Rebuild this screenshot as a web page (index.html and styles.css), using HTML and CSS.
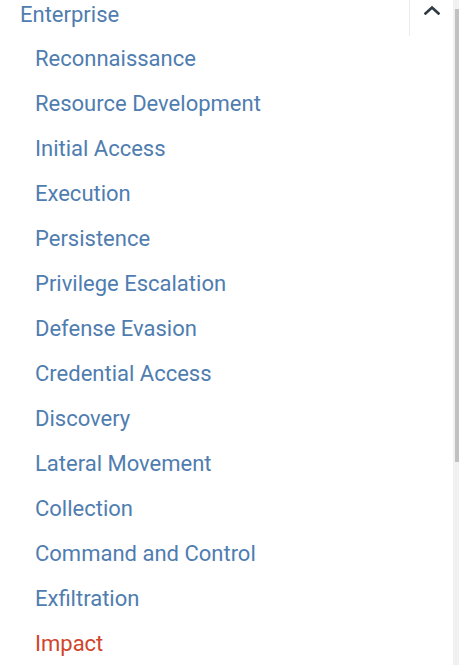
FILE: index.html
```html
<!DOCTYPE html>
<html>
<head>
<meta charset="utf-8">
<link rel="stylesheet" href="styles.css">
</head>
<body>
<div class="page">
  <nav class="sidebar">
    <div class="header">
      <span class="title">Enterprise</span>
      <button class="toggle" aria-label="collapse">
        <svg width="16" height="10" viewBox="0 0 16 10"><polyline points="1.5,8.5 8,2.5 14.5,8.5" fill="none" stroke="#2f3a44" stroke-width="2.6" stroke-linecap="square"/></svg>
      </button>
    </div>
    <ul class="items">
      <li>Reconnaissance</li>
      <li>Resource Development</li>
      <li>Initial Access</li>
      <li>Execution</li>
      <li>Persistence</li>
      <li>Privilege Escalation</li>
      <li>Defense Evasion</li>
      <li>Credential Access</li>
      <li>Discovery</li>
      <li>Lateral Movement</li>
      <li>Collection</li>
      <li>Command and Control</li>
      <li>Exfiltration</li>
      <li class="active">Impact</li>
    </ul>
  </nav>
  <div class="scrollbar"><div class="thumb"></div></div>
</div>
</body>
</html>
```
FILE: styles.css
```css
html, body {
  margin: 0;
  padding: 0;
  background: #fff;
  overflow: hidden;
}
.page {
  display: flex;
  width: 459px;
  height: 665px;
  font-family: Roboto, "Liberation Sans", sans-serif;
}
.sidebar {
  width: 453px;
  flex: none;
}
.header {
  display: flex;
  height: 36px;
}
.title {
  flex: 1;
  padding-left: 20px;
  font-size: 22px;
  line-height: 29px;
  color: #4f7db0;
}
.toggle {
  width: 44px;
  height: 36px;
  border: none;
  border-left: 1px solid #ececec;
  background: #fff;
  padding: 0 0 0 1px;
  display: flex;
  align-items: flex-start;
  justify-content: center;
  padding-top: 5px;
  box-sizing: border-box;
}
.items {
  list-style: none;
  margin: 0;
  padding: 0 0 0 35px;
}
.items li {
  font-size: 22px;
  line-height: 45px;
  color: #4f7db0;
}
.items li.active {
  color: #d0452b;
}
.scrollbar {
  width: 6px;
  flex: none;
  background: #f1f1f1;
  display: flex;
  justify-content: flex-end;
  padding-top: 9px;
  box-sizing: border-box;
}
.thumb {
  width: 4px;
  height: 453px;
  background: #c1c1c1;
}
```
